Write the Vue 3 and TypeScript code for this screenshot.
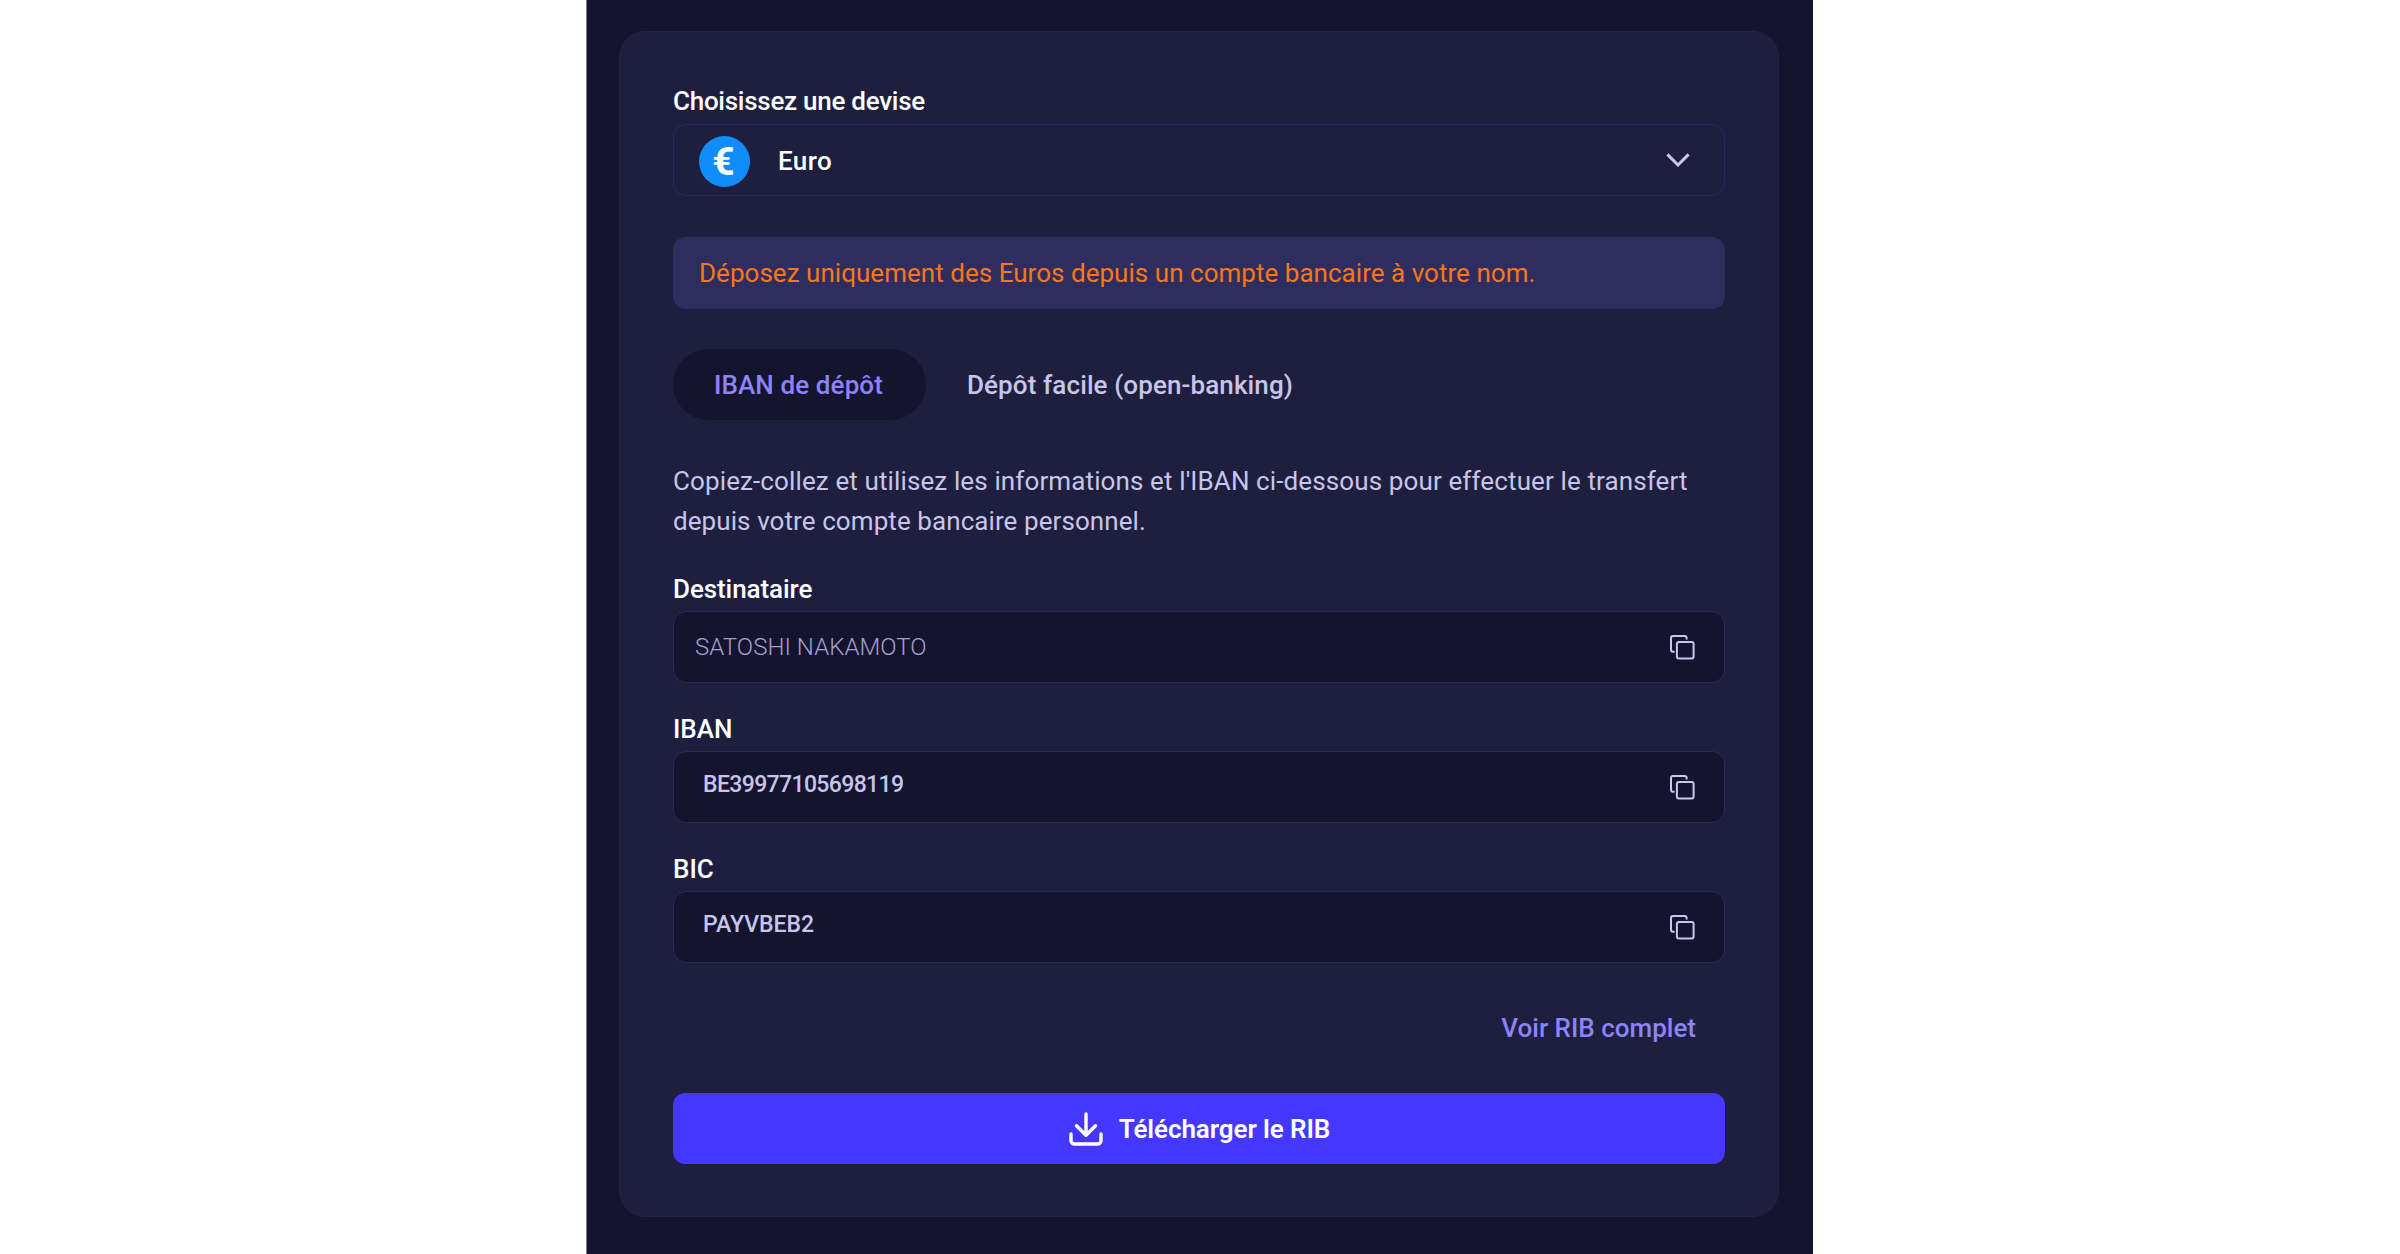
<script setup lang="ts">
interface Detail {
  id: string
  label: string
  value: string
}

const details: Detail[] = [
  { id: 'holder', label: 'Destinataire', value: 'SATOSHI NAKAMOTO' },
  { id: 'iban', label: 'IBAN', value: 'BE39977105698119' },
  { id: 'bic', label: 'BIC', value: 'PAYVBEB2' },
]
</script>

<template>
  <main class="page">
    <section class="card">
      <div class="label currency-label">Choisissez une devise</div>
      <div class="select">
        <span class="coin">€</span>
        <span class="currency">Euro</span>
        <svg class="chevron" viewBox="0 0 24 14">
          <path d="M1.4 1.4 12 12 22.6 1.4" />
        </svg>
      </div>

      <div class="note">Déposez uniquement des Euros depuis un compte bancaire à votre nom.</div>

      <nav class="tabs">
        <button class="tab active">IBAN de dépôt</button>
        <button class="tab">Dépôt facile (open-banking)</button>
      </nav>

      <p class="intro">
        Copiez-collez et utilisez les informations et l'IBAN ci-dessous pour effectuer le transfert<br />
        <span class="intro-end">depuis votre compte bancaire personnel.</span>
      </p>

      <div v-for="d in details" :key="d.id" class="detail">
        <div class="label" :class="`label-${d.id}`">{{ d.label }}</div>
        <div class="field">
          <span class="value" :class="d.id">{{ d.value }}</span>
          <svg class="copy" viewBox="0 0 25 25">
            <rect x="6.9" y="6.9" width="16.7" height="16.7" rx="2" />
            <path d="M3.8 16.7H3a2 2 0 0 1-2-2V3a2 2 0 0 1 2-2h11.6a2 2 0 0 1 2 2v.8" />
          </svg>
        </div>
      </div>

      <a class="link">Voir RIB complet</a>

      <button class="download">
        <svg class="download-icon" viewBox="0 0 34 34">
          <path d="M17 2v21M7.5 13.8 17 23.3l9.500-9.500M2 22v6.500a3.500 3.500 0 0 0 3.500 3.500h23a3.500 3.500 0 0 0 3.500-3.500V22" />
        </svg>
        <span>Télécharger le RIB</span>
      </button>
    </section>
  </main>
</template>

<style>
body {
  background: #fff;
}
</style>

<style scoped>
.page {
  box-sizing: border-box;
  width: 1227px;
  height: 1254px;
  margin-left: 586px;
  padding: 31px 34px 0 32px;
  border-left: 1px solid #7c7b8b;
  background: #14142e;
  font-family: Roboto, "Liberation Sans", sans-serif;
  font-size: 26px;
  line-height: 40px;
  color: #c8c5ea;
}
.card {
  box-sizing: border-box;
  height: 1186px;
  padding: 49px 53px 0;
  border: 1px solid #232342;
  border-radius: 26px;
  background: #1e1e3f;
  display: flex;
  flex-direction: column;
}
.label {
  padding-top: 1px;
  margin-bottom: 2px;
  color: #fff;
  font-weight: 500;
}
.currency-label {
  padding: 0 0 1px;
  letter-spacing: -0.27px;
}
.label-holder {
  letter-spacing: -0.08px;
}
.select,
.field {
  box-sizing: border-box;
  height: 71.5px;
  border: 1px solid #2a295f;
  border-radius: 13px;
  display: flex;
  align-items: center;
}
.select {
  padding: 3px 34px 0 25px;
}
.coin {
  width: 51px;
  height: 51px;
  border-radius: 50%;
  background: #118dfb;
  color: #fff;
  font-size: 39px;
  font-weight: 700;
  line-height: 52px;
  text-align: center;
  text-indent: -2px;
}
.currency {
  flex: 1;
  margin-left: 28px;
  color: #fff;
  font-weight: 500;
  letter-spacing: 0.4px;
}
.chevron {
  width: 24px;
  height: 14px;
  margin-bottom: 3px;
  fill: none;
  stroke: #cac6ec;
  stroke-width: 2.9;
}
.note {
  box-sizing: border-box;
  height: 72px;
  margin-top: 41.5px;
  padding: 16px 26px;
  border-radius: 13px;
  background: #2e2d60;
  color: #fa7716;
  letter-spacing: 0.03px;
}
.tabs {
  display: flex;
  margin-top: 40px;
}
.tab {
  height: 71px;
  padding: 0 41px;
  border: 0;
  border-radius: 36px;
  background: none;
  color: inherit;
  font: inherit;
  font-weight: 500;
  letter-spacing: 0.11px;
}
.active {
  width: 253px;
  padding: 0 2px 0 0;
  background: #14142e;
  color: #8d83fa;
}
.intro {
  margin: 41px 0 27px;
  white-space: nowrap;
  letter-spacing: 0.118px;
}
.intro-end {
  letter-spacing: 0.08px;
}
.detail {
  margin-bottom: 25.5px;
}
.field {
  padding: 1px 29px 0 21px;
  background: #14142e;
}
.value {
  flex: 1;
}
.holder {
  color: #a5a1cf;
  font-size: 24px;
  font-weight: 300;
  letter-spacing: 0.05px;
}
.iban,
.bic {
  padding: 0 0 4px 8px;
  font-size: 23px;
  font-weight: 500;
}
.iban {
  letter-spacing: -0.63px;
}
.copy {
  width: 25px;
  height: 25px;
  fill: none;
  stroke: #cac6ec;
  stroke-width: 2;
  stroke-linecap: round;
}
.link {
  margin: 19.5px 29px 45px;
  text-align: right;
  color: #8d83fa;
  font-weight: 500;
}
.download {
  height: 71.5px;
  padding: 1px 0 0 1px;
  border: 0;
  border-radius: 12px;
  background: #4637ff;
  color: #fff;
  font: inherit;
  font-weight: 600;
  letter-spacing: -0.08px;
  display: flex;
  align-items: center;
  justify-content: center;
  gap: 16px;
}
.download-icon {
  width: 34px;
  height: 34px;
  fill: none;
  stroke: #fff;
  stroke-width: 3.4;
  stroke-linecap: round;
  stroke-linejoin: round;
}
</style>
